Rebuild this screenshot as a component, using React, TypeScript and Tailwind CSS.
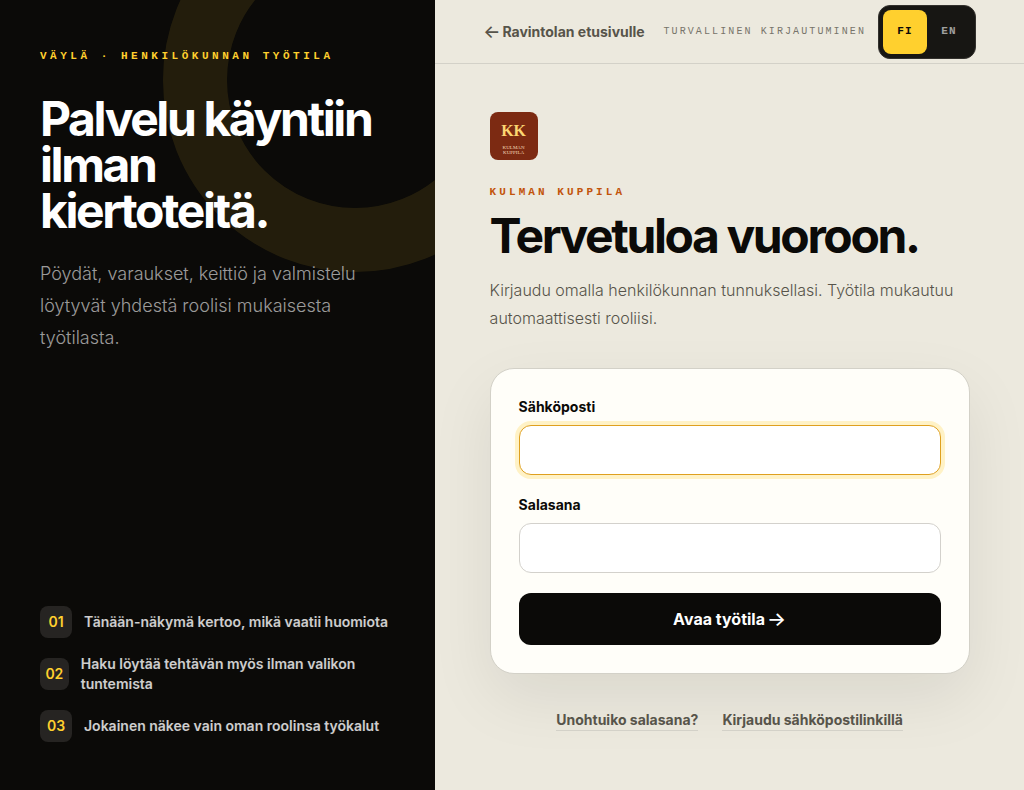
import React, { useState } from "react";

const steps = [
  { id: "01", text: "Tänään-näkymä kertoo, mikä vaatii huomiota" },
  { id: "02", text: "Haku löytää tehtävän myös ilman valikon tuntemista" },
  { id: "03", text: "Jokainen näkee vain oman roolinsa työkalut" },
];

const IntroPanel: React.FC = () => (
  <aside className="relative flex flex-col justify-between overflow-hidden bg-[#0b0a08] px-10 py-12 text-white">
    <div className="absolute -top-28 -right-28 size-96 rounded-full border-64 border-[#ffd02e]/10" />

    <div className="relative">
      <p className="font-['Liberation_Mono',monospace] text-[11px] leading-4 font-bold tracking-[0.32em] text-[#ffd02e] uppercase">
        Väylä · Henkilökunnan työtila
      </p>
      <h2 className="mt-8 max-w-[344px] text-[48px] leading-[46px] font-bold tracking-tighter">
        Palvelu käyntiin ilman kiertoteitä.
      </h2>
      <p className="mt-6 text-lg leading-8 font-light text-white/60">
        Pöydät, varaukset, keittiö ja valmistelu löytyvät yhdestä roolisi
        mukaisesta työtilasta.
      </p>
    </div>

    <ol className="relative flex flex-col gap-4">
      {steps.map((step) => (
        <li
          key={step.id}
          className="flex items-center gap-3 text-sm leading-5 font-semibold text-white/80"
        >
          <span className="grid size-8 place-items-center rounded-lg bg-[#262422] text-[#ffd02e]">
            {step.id}
          </span>
          {step.text}
        </li>
      ))}
    </ol>
  </aside>
);

const LanguageSwitch: React.FC = () => {
  const [lang, setLang] = useState<"fi" | "en">("fi");

  return (
    <div className="flex rounded-xl border border-[#33312d] bg-[#171613] p-1 font-['Liberation_Mono',monospace] text-[11px] tracking-widest">
      <button
        type="button"
        onClick={() => setLang("fi")}
        className={`size-11 rounded-lg font-bold ${
          lang === "fi" ? "bg-[#ffd02e] text-[#0b0a08]" : "text-white/60"
        }`}
      >
        FI
      </button>
      <button
        type="button"
        onClick={() => setLang("en")}
        className={`size-11 rounded-lg font-bold ${
          lang === "en" ? "bg-[#ffd02e] text-[#0b0a08]" : "text-white/60"
        }`}
      >
        EN
      </button>
    </div>
  );
};

const Logo: React.FC = () => (
  <div className="flex size-12 flex-col items-center justify-center rounded-lg bg-[#7c2a12] pt-1 font-['Liberation_Serif',serif]">
    <span className="text-base leading-5 font-bold text-[#fcd672]">KK</span>
    <span className="mt-1 text-center text-[5px] leading-[5px] text-[#f3d9b8]">
      KULMAN
      <br />
      KUPPILA
    </span>
  </div>
);

const App: React.FC = () => {
  const [email, setEmail] = useState("");
  const [password, setPassword] = useState("");

  return (
    <div className="grid min-h-screen grid-cols-[0.85fr_1.15fr] bg-[#ece9de] font-['Inter',sans-serif] text-[#0b0a08]">
      <IntroPanel />

      <div className="flex flex-col">
        <header className="flex h-16 items-center justify-between border-b border-[#d3d1c8] px-12">
          <a
            href="#etusivu"
            className="flex items-center gap-0.5 text-sm font-bold whitespace-nowrap text-[#57544a]"
          >
            <span className="text-lg leading-5 font-medium">←</span>
            Ravintolan etusivulle
          </a>
          <div className="flex items-center gap-3">
            <span className="font-['Liberation_Mono',monospace] text-[10px] tracking-[0.21em] whitespace-nowrap text-[#77746a] uppercase">
              Turvallinen kirjautuminen
            </span>
            <LanguageSwitch />
          </div>
        </header>

        <main className="mx-auto w-full max-w-[480px] py-12">
          <Logo />
          <p className="mt-6 font-['Liberation_Mono',monospace] text-[11px] leading-4 font-bold tracking-[0.28em] text-[#c2540a] uppercase">
            Kulman Kuppila
          </p>
          <h1 className="mt-3 text-[48px] leading-[48px] font-bold tracking-tighter whitespace-nowrap">
            Tervetuloa vuoroon.
          </h1>
          <p className="mt-4 text-base leading-7 font-light text-[#57544a]">
            Kirjaudu omalla henkilökunnan tunnuksellasi. Työtila mukautuu
            automaattisesti rooliisi.
          </p>

          <form
            onSubmit={(e) => e.preventDefault()}
            className="mt-9 rounded-3xl border border-[#d3d1c8] bg-[#fffef9] p-7 shadow-[0_24px_64px_rgba(11,10,8,0.08)]"
          >
            <label htmlFor="email" className="block text-sm font-bold">
              Sähköposti
            </label>
            <input
              id="email"
              type="email"
              value={email}
              onChange={(e) => setEmail(e.target.value)}
              className="mt-2 block h-[50px] w-full rounded-xl border border-[#dfa01f] bg-white px-4 ring-4 ring-[#ffd02e]/25 outline-none"
            />
            <label htmlFor="password" className="mt-5 block text-sm font-bold">
              Salasana
            </label>
            <input
              id="password"
              type="password"
              value={password}
              onChange={(e) => setPassword(e.target.value)}
              className="mt-2 block h-[50px] w-full rounded-xl border border-[#d3d1cc] bg-white px-4 outline-none"
            />
            <button
              type="submit"
              className="mt-5 flex h-13 w-full items-center justify-center gap-0.5 rounded-xl bg-[#0b0a08] text-base font-bold text-white"
            >
              Avaa työtila
              <span className="text-xl leading-5 font-medium">→</span>
            </button>
          </form>

          <nav className="mt-9 flex justify-center gap-6 text-sm font-bold text-[#57544a]">
            <a href="#salasana" className="border-b border-[#d3d1c8]">
              Unohtuiko salasana?
            </a>
            <a href="#linkki" className="border-b border-[#d3d1c8]">
              Kirjaudu sähköpostilinkillä
            </a>
          </nav>
        </main>
      </div>
    </div>
  );
};

export default App;
